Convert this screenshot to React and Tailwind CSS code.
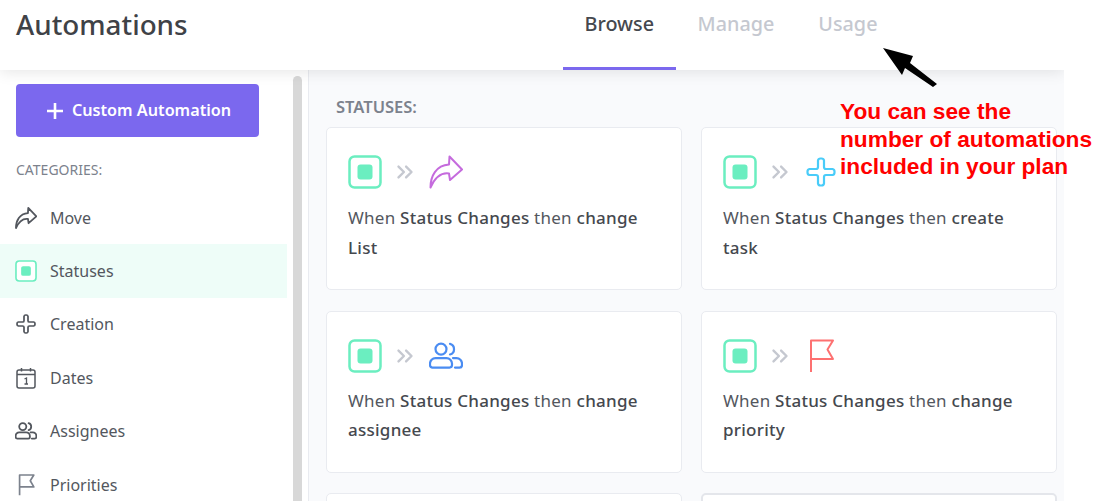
import React from "react";
import { ChevronsRight } from "lucide-react";

function StatusIcon({ size = 34 }) {
  return (
    <svg width={size} height={size} viewBox="0 0 34 34" fill="none">
      <rect x="1.5" y="1.5" width="31" height="31" rx="5" stroke="#6beec0" strokeWidth="2.5" fill="#fff" />
      <rect x="9.5" y="9.5" width="15" height="15" rx="3" fill="#6beec0" />
    </svg>
  );
}

function MoveIcon({ color, size = 34, sw = 2 }) {
  return (
    <svg width={size} height={size} viewBox="0 0 34 34" fill="none">
      <path
        d="M20.5 1.5 L33 14.5 L21 25 L20 18.5 C13 17.5 6.5 21.5 1.5 32.5 C1.5 21 7 10.5 20 9.5 Z"
        stroke={color}
        strokeWidth={sw}
        strokeLinejoin="round"
      />
    </svg>
  );
}

function PlusIcon({ color, size = 30, sw = 2.2 }) {
  return (
    <svg width={size} height={size} viewBox="0 0 30 30" fill="none">
      <path
        d="M12 10 V3.5 A2.5 2.5 0 0 1 14.5 1.5 H15.5 A2.5 2.5 0 0 1 18 3.5 V10 A2 2 0 0 0 20 12 H26.5 A2.5 2.5 0 0 1 28.5 14.5 V15.5 A2.5 2.5 0 0 1 26.5 18 H20 A2 2 0 0 0 18 20 V26.5 A2.5 2.5 0 0 1 15.5 28.5 H14.5 A2.5 2.5 0 0 1 12 26.5 V20 A2 2 0 0 0 10 18 H3.5 A2.5 2.5 0 0 1 1.5 15.5 V14.5 A2.5 2.5 0 0 1 3.5 12 H10 A2 2 0 0 0 12 10 Z"
        stroke={color}
        strokeWidth={sw}
      />
    </svg>
  );
}

function UsersIcon({ color, size = 34, sw = 2.2 }) {
  return (
    <svg width={size} height={size * 0.8} viewBox="0 0 34 27" fill="none">
      <circle cx="12" cy="7" r="5.5" stroke={color} strokeWidth={sw} />
      <path d="M21 1.8 A5.5 5.5 0 0 1 21 12.4" stroke={color} strokeWidth={sw} strokeLinecap="round" />
      <path
        d="M6.5 16 H17.5 A5.5 5.5 0 0 1 23 21.5 V23 A2.5 2.5 0 0 1 20.5 25.5 H3.5 A2.5 2.5 0 0 1 1 23 V21.5 A5.5 5.5 0 0 1 6.5 16 Z"
        stroke={color}
        strokeWidth={sw}
      />
      <path d="M24 16 H27.5 A5.5 5.5 0 0 1 33 21.5 V23 A2.5 2.5 0 0 1 30.5 25.5 H26" stroke={color} strokeWidth={sw} strokeLinecap="round" />
    </svg>
  );
}

function FlagIcon({ color, size = 34, sw = 2 }) {
  return (
    <svg width={size} height={size} viewBox="0 0 34 34" fill="none">
      <path d="M4 33 V1.5 H26 L20.5 10.5 L26 20 H4" stroke={color} strokeWidth={sw} strokeLinejoin="round" />
    </svg>
  );
}

function DatesIcon() {
  return (
    <svg width="20" height="22" viewBox="0 0 20 22" fill="none">
      <rect x="1" y="3" width="18" height="18" rx="2" stroke="#53575e" strokeWidth="1.5" />
      <path d="M1 7.5 H19 M5.5 1 V4.5 M14.5 1 V4.5" stroke="#53575e" strokeWidth="1.5" />
      <path d="M8.5 12 L10.5 11 V17 M8.5 17 H12" stroke="#53575e" strokeWidth="1.3" />
    </svg>
  );
}

const categories = [
  { name: "Move", icon: <MoveIcon color="#53575e" size={22} sw={2.8} /> },
  { name: "Statuses", icon: <StatusIcon size={22} />, active: true },
  { name: "Creation", icon: <PlusIcon color="#53575e" size={20} sw={2.6} /> },
  { name: "Dates", icon: <DatesIcon /> },
  { name: "Assignees", icon: <UsersIcon color="#53575e" size={22} sw={2.8} /> },
  { name: "Priorities", icon: <span className="ml-[4px]"><FlagIcon color="#7c828d" size={22} sw={2.6} /></span> },
];

const cards = [
  { icon: <MoveIcon color="#c56bdd" />, strong: "change", last: "List", iconClass: "ml-[1px]", textClass: "mt-[14px]", heightClass: "h-[163px]" },
  { icon: <PlusIcon color="#49ccf9" />, strong: "create", last: "task", iconClass: "ml-[3px]", textClass: "mt-[14px]", heightClass: "h-[163px]" },
  { icon: <UsersIcon color="#4a8cf2" />, strong: "change", last: "assignee", iconClass: "ml-[1px]", textClass: "mt-[13px]", heightClass: "h-[162px]" },
  { icon: <FlagIcon color="#fd7171" />, strong: "change", last: "priority", iconClass: "ml-[4px]", textClass: "mt-[13px]", heightClass: "h-[162px]" },
];

function Card({ card }) {
  return (
    <div className={`${card.heightClass} rounded-[5px] border border-[#e9ebf0] bg-white pl-[21px] pt-[27px]`}>
      <div className="flex h-[34px] items-center">
        <StatusIcon />
        <ChevronsRight size={26} strokeWidth={2.2} className="mx-[10px] text-[#c5c8d0]" />
        <div className={card.iconClass}>{card.icon}</div>
      </div>
      <p className={`${card.textClass} w-[320px] text-[17px] leading-[29.5px] tracking-[0.25px] text-[#53575e]`}>
        When <span className="font-medium text-[#45484e]">Status Changes</span> then{" "}
        <span className="font-medium text-[#45484e]">{card.strong}</span>
        <br />
        <span className="font-medium text-[#45484e]">{card.last}</span>
      </p>
    </div>
  );
}

export default function App() {
  return (
    <div className="relative h-[501px] w-[1097px] overflow-hidden bg-white font-['Noto_Sans',sans-serif]">
      <div className="flex h-full w-[1064px] flex-col overflow-hidden">
        <header className="relative z-10 flex h-[70px] shrink-0 bg-white shadow-[0_2px_14px_rgba(0,0,0,0.1)]">
          <h1 className="w-[563px] pl-[16px] pt-[6px] text-[27.8px] font-medium leading-[36px] text-[#3f4247]">
            Automations
          </h1>
          <nav className="flex h-full text-[19.8px] font-medium leading-[48px] text-[#c5c8d0]">
            <span className="h-full border-b-[3px] border-[#7b68ee] px-[21.5px] text-[#45484e]">Browse</span>
            <span className="h-full px-[22px]">Manage</span>
            <span className="h-full px-[22px]">Usage</span>
          </nav>
        </header>

        <div className="flex min-h-0 flex-1">
          <aside className="flex w-[309px] shrink-0 border-r border-[#e9ebf0] bg-white">
            <div className="w-[287px] shrink-0 pt-[14px]">
              <button className="ml-[16px] flex h-[53px] w-[243px] items-center justify-center gap-[8px] rounded-[4px] bg-[#7b68ee] pl-[2px] text-[16.2px] font-semibold text-white">
                <svg width="18" height="18" viewBox="0 0 18 18" fill="none">
                  <path d="M9 1 V17 M1 9 H17" stroke="#fff" strokeWidth="2.6" />
                </svg>
                Custom Automation
              </button>
              <div className="ml-[16px] mt-[24px] text-[14px] leading-[18px] text-[#7c828d]">CATEGORIES:</div>
              <ul className="mt-[12px]">
                {categories.map((c) => (
                  <li
                    key={c.name}
                    className={`flex h-[53.4px] items-center pl-[15px] text-[16px] text-[#53575e] ${c.active ? "bg-[#eefdf8]" : ""}`}
                  >
                    <span className="flex w-[22px] justify-center">{c.icon}</span>
                    <span className="ml-[13px]">{c.name}</span>
                  </li>
                ))}
              </ul>
            </div>
            <div className="ml-[6px] mt-[6px] h-full w-[9px] rounded-[5px] bg-[#d8d8d8]" />
          </aside>

          <main className="min-w-0 flex-1 bg-[#f9fafc] pl-[17px] pr-[7px] pt-[27px]">
            <div className="pl-[10px] text-[16.5px] font-semibold leading-[20px] text-[#7c828d]">STATUSES:</div>
            <div className="mt-[10px] grid grid-cols-2 gap-x-[19px] gap-y-[20.5px]">
              {cards.map((card) => (
                <Card key={card.last} card={card} />
              ))}
              <div className="h-[40px] rounded-[5px] border border-[#e9ebf0] bg-white" />
              <div className="h-[40px] rounded-[5px] border-2 border-[#e4e6eb] bg-white" />
            </div>
          </main>
        </div>
      </div>

      <svg className="absolute left-[880px] top-[44px] z-20" width="62" height="46" viewBox="0 0 62 46" fill="none">
        <path d="M3 4 L33 12 L30 19 L57 40 L53 43 L25 24 L22 31 Z" fill="#000" />
      </svg>
      <div className="absolute left-[840px] top-[98px] z-20 whitespace-nowrap font-['Liberation_Sans',sans-serif] text-[22.7px] font-bold leading-[27.5px] text-[#ff0000]">
        You can see the
        <br />
        number of automations
        <br />
        included in your plan
      </div>
    </div>
  );
}
